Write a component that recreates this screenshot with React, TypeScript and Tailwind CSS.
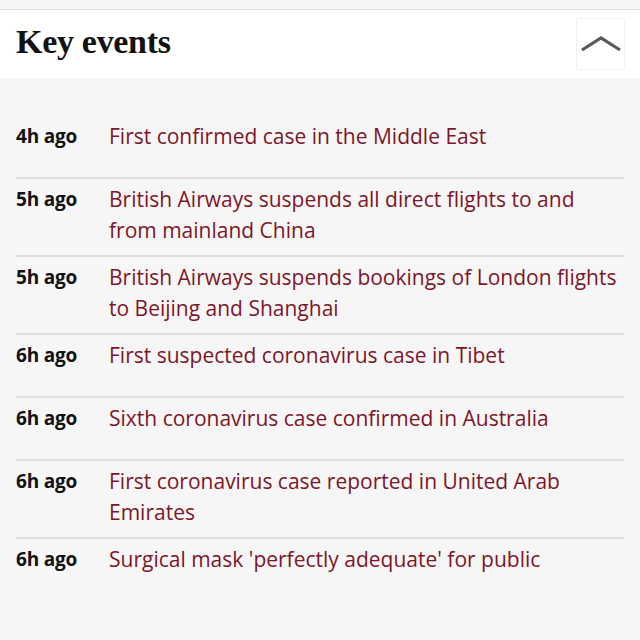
import React from "react";

const events = [
  { time: "4h ago", title: "First confirmed case in the Middle East" },
  { time: "5h ago", title: "British Airways suspends all direct flights to and from mainland China" },
  { time: "5h ago", title: "British Airways suspends bookings of London flights to Beijing and Shanghai" },
  { time: "6h ago", title: "First suspected coronavirus case in Tibet" },
  { time: "6h ago", title: "Sixth coronavirus case confirmed in Australia" },
  { time: "6h ago", title: "First coronavirus case reported in United Arab Emirates" },
  { time: "6h ago", title: "Surgical mask 'perfectly adequate' for public" },
];

export default function App() {
  return (
    <div className="w-[640px] h-[640px] bg-[#f6f6f6] overflow-hidden font-['Open_Sans',sans-serif]">
      <div className="h-[10px] border-b border-[#dcdcdc]" />
      <div className="bg-white h-[68px] flex items-center justify-between pl-4 pr-[15px]">
        <h2 className="font-['Liberation_Serif',serif] font-bold text-[34px] text-[#121212] tracking-[-0.3px] -mt-[6px]">
          Key events
        </h2>
        <button className="w-[49px] h-[52px] border border-[#f0f0f0] flex items-center justify-center">
          <svg width="42" height="20" viewBox="0 0 42 20">
            <path d="M2 16 L21 4 L40 16" fill="none" stroke="#5a5a5a" strokeWidth="3.2" strokeLinejoin="miter" />
          </svg>
        </button>
      </div>
      <ul className="pt-[38px] px-4 text-[21px] leading-[31px]">
        {events.map((e, i) => (
          <li
            key={i}
            className={
              "flex min-h-[63px] pt-[5px] pb-[9px] " + (i < events.length - 1 ? "border-b-2 border-[#e0e0e0]" : "")
            }
          >
            <span className="w-[93px] shrink-0 font-bold text-[19px] text-[#121212] tracking-[-0.2px]">{e.time}</span>
            <span className="text-[#7d1628]">{e.title}</span>
          </li>
        ))}
      </ul>
    </div>
  );
}
